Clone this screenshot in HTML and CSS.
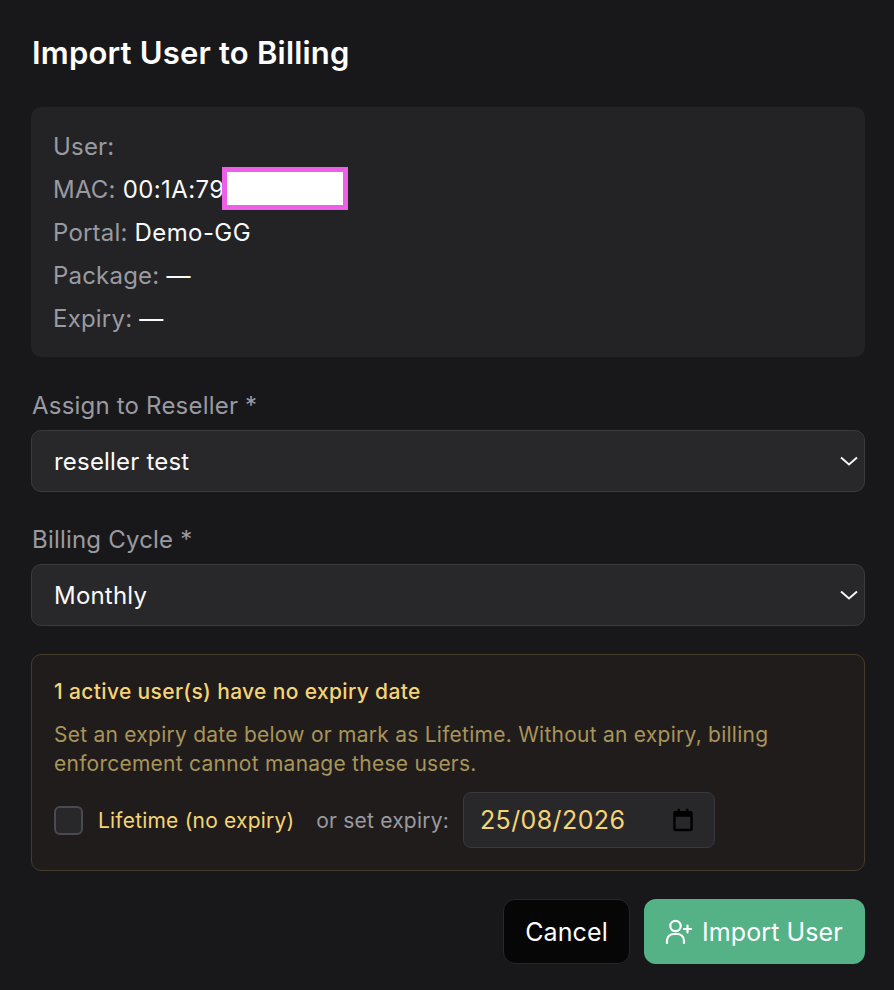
FILE: index.html
```html
<!DOCTYPE html>
<html lang="en">
<head>
    <meta charset="UTF-8">
    <meta name="viewport" content="width=device-width, initial-scale=1.0">
    <title>Import User to Billing</title>
    <link rel="stylesheet" href="styles.css">
</head>
<body>
    <div class="modal">
        <h1>Import User to Billing</h1>

        <div class="info-box">
            <div class="info-row">User:</div>
            <div class="info-row">MAC: <span class="info-value">00:1A:79</span><span class="redacted"></span></div>
            <div class="info-row">Portal: <span class="info-value">Demo-GG</span></div>
            <div class="info-row">Package: <span class="info-value">—</span></div>
            <div class="info-row">Expiry: <span class="info-value">—</span></div>
        </div>

        <div class="field">
            <label for="reseller">Assign to Reseller *</label>
            <div class="select-wrap">
                <select id="reseller">
                    <option>reseller test</option>
                </select>
                <svg class="chevron" viewBox="0 0 18 10" width="18" height="10"><path d="M1 1.5 9 8.5 17 1.5" fill="none" stroke="#f4f4f5" stroke-width="2"/></svg>
            </div>
        </div>

        <div class="field">
            <label for="cycle">Billing Cycle *</label>
            <div class="select-wrap">
                <select id="cycle">
                    <option>Monthly</option>
                </select>
                <svg class="chevron" viewBox="0 0 18 10" width="18" height="10"><path d="M1 1.5 9 8.5 17 1.5" fill="none" stroke="#f4f4f5" stroke-width="2"/></svg>
            </div>
        </div>

        <div class="warning-box">
            <div class="warning-title">1 active user(s) have no expiry date</div>
            <p class="warning-text">Set an expiry date below or mark as Lifetime. Without an expiry, billing enforcement cannot manage these users.</p>
            <div class="expiry-row">
                <label class="lifetime">
                    <input type="checkbox">
                    <span>Lifetime (no expiry)</span>
                </label>
                <span class="or-text">or set expiry:</span>
                <div class="date-input">
                    <span>25/08/2026</span>
                    <svg viewBox="0 0 24 24" width="26" height="26"><path d="M7 1.5h2.2v2.2h5.6V1.5H17v2.2h2.2c1 0 1.8.8 1.8 1.8v15c0 1-.8 1.8-1.8 1.8H4.8c-1 0-1.8-.8-1.8-1.8v-15c0-1 .8-1.8 1.8-1.8H7V1.5zM5.2 9v11.1h13.6V9H5.2z" fill="#000"/></svg>
                </div>
            </div>
        </div>

        <div class="actions">
            <button class="btn btn-cancel" type="button">Cancel</button>
            <button class="btn btn-import" type="button">
                <svg viewBox="0 0 28 28" width="28" height="28" fill="none" stroke="#fff" stroke-width="2.2" stroke-linecap="round" stroke-linejoin="round"><path d="M2 25v-2.5c0-4 3.2-6.5 7-6.5h3c3.8 0 7 2.5 7 6.5V25"/><circle cx="10.5" cy="8" r="5.2"/><path d="M22.5 7.5v7M19 11h7"/></svg>
                Import User
            </button>
        </div>
    </div>
</body>
</html>
```

FILE: styles.css
```css
* {
    box-sizing: border-box;
}

body {
    font-family: Inter, 'Liberation Sans', sans-serif;
    background-color: #18181b;
    margin: 0;
    padding: 0;
    color: #f4f4f5;
}

.modal {
    display: flex;
    flex-direction: column;
    padding: 32px 29px 26px 31px;
}

h1 {
    margin: 0 0 33px 1px;
    font-size: 31px;
    line-height: 42px;
    font-weight: 600;
    letter-spacing: 0.2px;
    color: #fff;
}

.info-box {
    height: 250px;
    padding: 18px 22px;
    background-color: #232326;
    border-radius: 10px;
    margin-bottom: 28px;
    font-size: 24px;
    letter-spacing: 0.2px;
    color: #9a9aa1;
}

.info-row {
    height: 43px;
    line-height: 43px;
    white-space: nowrap;
    display: flex;
    gap: 7px;
}

.info-value {
    color: #fafafa;
    letter-spacing: 0.4px;
}

.redacted {
    width: 126px;
    height: 43px;
    margin: -1px 0 0 -10px;
    background-color: #fff;
    border: 5px solid #ee5fe8;
}

.field {
    margin-bottom: 27px;
}

.field label {
    display: block;
    margin: 0 0 3px 1px;
    font-size: 24px;
    line-height: 42px;
    letter-spacing: 0.2px;
    color: #9a9aa1;
}

.select-wrap {
    position: relative;
}

.select-wrap select {
    display: block;
    width: 100%;
    height: 62px;
    padding: 0 22px;
    font-family: inherit;
    font-size: 24px;
    letter-spacing: 0.2px;
    color: #fafafa;
    background-color: #28282b;
    border: 1px solid #3a3a3e;
    border-radius: 10px;
    appearance: none;
    outline: none;
}

.chevron {
    position: absolute;
    right: 7px;
    top: 26px;
}

.warning-box {
    height: 217px;
    margin-top: 1px;
    padding: 20px 22px;
    background-color: #201c1b;
    border: 1px solid #443c2a;
    border-radius: 10px;
    margin-bottom: 28px;
}

.warning-title {
    font-size: 21px;
    line-height: 34px;
    font-weight: 500;
    letter-spacing: 0.35px;
    color: #f5d476;
}

.warning-text {
    margin: 11px 0 14px;
    font-size: 21px;
    line-height: 29px;
    letter-spacing: 0.25px;
    color: #a8955b;
}

.expiry-row {
    display: flex;
    align-items: center;
}

.lifetime {
    display: flex;
    align-items: center;
    gap: 15px;
    font-size: 21px;
    letter-spacing: 0.2px;
    color: #f5d476;
}

.lifetime input {
    width: 29px;
    height: 29px;
    margin: 0;
    appearance: none;
    background-color: #28282b;
    border: 2px solid #4a4a50;
    border-radius: 6px;
}

.or-text {
    margin: 0 14px 0 22px;
    font-size: 21px;
    letter-spacing: 0.2px;
    color: #9a9aa1;
}

.date-input {
    width: 252px;
    height: 56px;
    padding: 0 18px 0 16px;
    display: flex;
    align-items: center;
    justify-content: space-between;
    font-size: 25px;
    letter-spacing: 0.4px;
    color: #f5d476;
    background-color: #28282b;
    border: 1px solid #3a3a3e;
    border-radius: 8px;
}

.actions {
    display: flex;
    justify-content: flex-end;
    gap: 14px;
}

.btn {
    height: 65px;
    font-family: inherit;
    font-size: 25px;
    letter-spacing: 0.1px;
    border-radius: 12px;
    display: flex;
    align-items: center;
}

.btn-cancel {
    width: 127px;
    justify-content: center;
    color: #fff;
    background-color: #060607;
    border: 1px solid #27272a;
}

.btn-import {
    width: 221px;
    padding: 0 0 0 21px;
    gap: 9px;
    color: #fff;
    background-color: #55b287;
    border: none;
}
```
